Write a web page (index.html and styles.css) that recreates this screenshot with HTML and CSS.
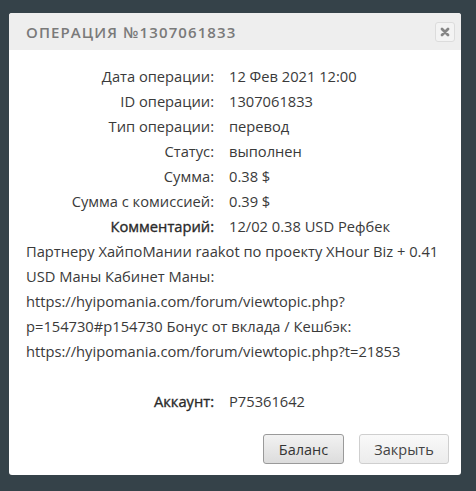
FILE: index.html
```html
<!DOCTYPE html>
<html lang="ru">
<head>
<meta charset="utf-8">
<link rel="stylesheet" href="styles.css">
</head>
<body>
<div class="dialog">
  <div class="head">
    <span class="title">ОПЕРАЦИЯ №1307061833</span>
    <button class="close" aria-label="close">
      <svg width="10" height="10" viewBox="0 0 10 10"><path d="M2 2L8 8M8 2L2 8" stroke="#858585" stroke-width="2.8" stroke-linecap="round"/></svg>
    </button>
  </div>
  <div class="body">
    <div class="row"><span class="lbl">Дата операции:</span>12 Фев 2021 12:00</div>
    <div class="row"><span class="lbl">ID операции:</span>1307061833</div>
    <div class="row"><span class="lbl">Тип операции:</span>перевод</div>
    <div class="row"><span class="lbl">Статус:</span>выполнен</div>
    <div class="row"><span class="lbl">Сумма:</span>0.38 $</div>
    <div class="row"><span class="lbl">Сумма с комиссией:</span>0.39 $</div>
    <div class="row"><span class="lbl strong">Комментарий:</span>12/02 0.38 USD Рефбек Партнеру ХайпоМании raakot по проекту XHour Biz + 0.41 USD Маны Кабинет Маны: https://hyipomania.com/forum/viewtopic.php?p=154730#p154730 Бонус от вклада / Кешбэк: https://hyipomania.com/forum/viewtopic.php?t=21853</div>
    <div class="row spacer"></div>
    <div class="row"><span class="lbl strong">Аккаунт:</span>P75361642</div>
  </div>
  <div class="foot">
    <button class="btn primary">Баланс</button>
    <button class="btn">Закрыть</button>
  </div>
</div>
</body>
</html>
```
FILE: styles.css
```css
html, body { margin: 0; padding: 0; }
body {
  width: 476px;
  height: 491px;
  background: #354249;
  font-family: "Open Sans", "Noto Sans", sans-serif;
  overflow: hidden;
  padding: 13px 15px 0 9px;
  box-sizing: border-box;
}
.dialog {
  background: #fff;
  border-radius: 3px;
  overflow: hidden;
  width: 452px;
  height: 462px;
  display: flex;
  flex-direction: column;
}
.head {
  background: #eeeeee;
  height: 37px;
  display: flex;
  align-items: center;
  justify-content: space-between;
  padding: 0 6px 0 17px;
  box-sizing: border-box;
}
.title {
  font-size: 15px;
  font-weight: 600;
  color: #7a7a7a;
  letter-spacing: 1.1px;
}
.close {
  width: 20px;
  height: 20px;
  padding: 0;
  border: 1px solid #dcdcdc;
  border-radius: 3px;
  background: #f3f3f3;
  display: flex;
  align-items: center;
  justify-content: center;
}
.body {
  padding: 14px 17px 0 17px;
  font-size: 14.7px;
  color: #3a3a3a;
  line-height: 25px;
  flex: 1;
}
.row { min-height: 25px; }
.spacer { height: 25px; }
.lbl {
  display: inline-block;
  width: 188px;
  text-align: right;
  margin-right: 15px;
}
.strong { color: #2a2a2a; -webkit-text-stroke: 0.35px #2a2a2a; }
.foot {
  display: flex;
  justify-content: flex-end;
  gap: 15px;
  padding: 0 12px 11px 0;
}
.btn {
  font-family: inherit;
  font-size: 14.5px;
  color: #444;
  height: 30px;
  border: 1px solid #cfcfcf;
  border-radius: 3px;
  background: linear-gradient(#f9f9f9, #ececec);
  padding: 0;
  width: 90px;
}
.btn.primary {
  width: 81px;
  border-color: #9a9a9a;
  background: linear-gradient(#f2f2f2, #dcdcdc);
  color: #333;
}
```
